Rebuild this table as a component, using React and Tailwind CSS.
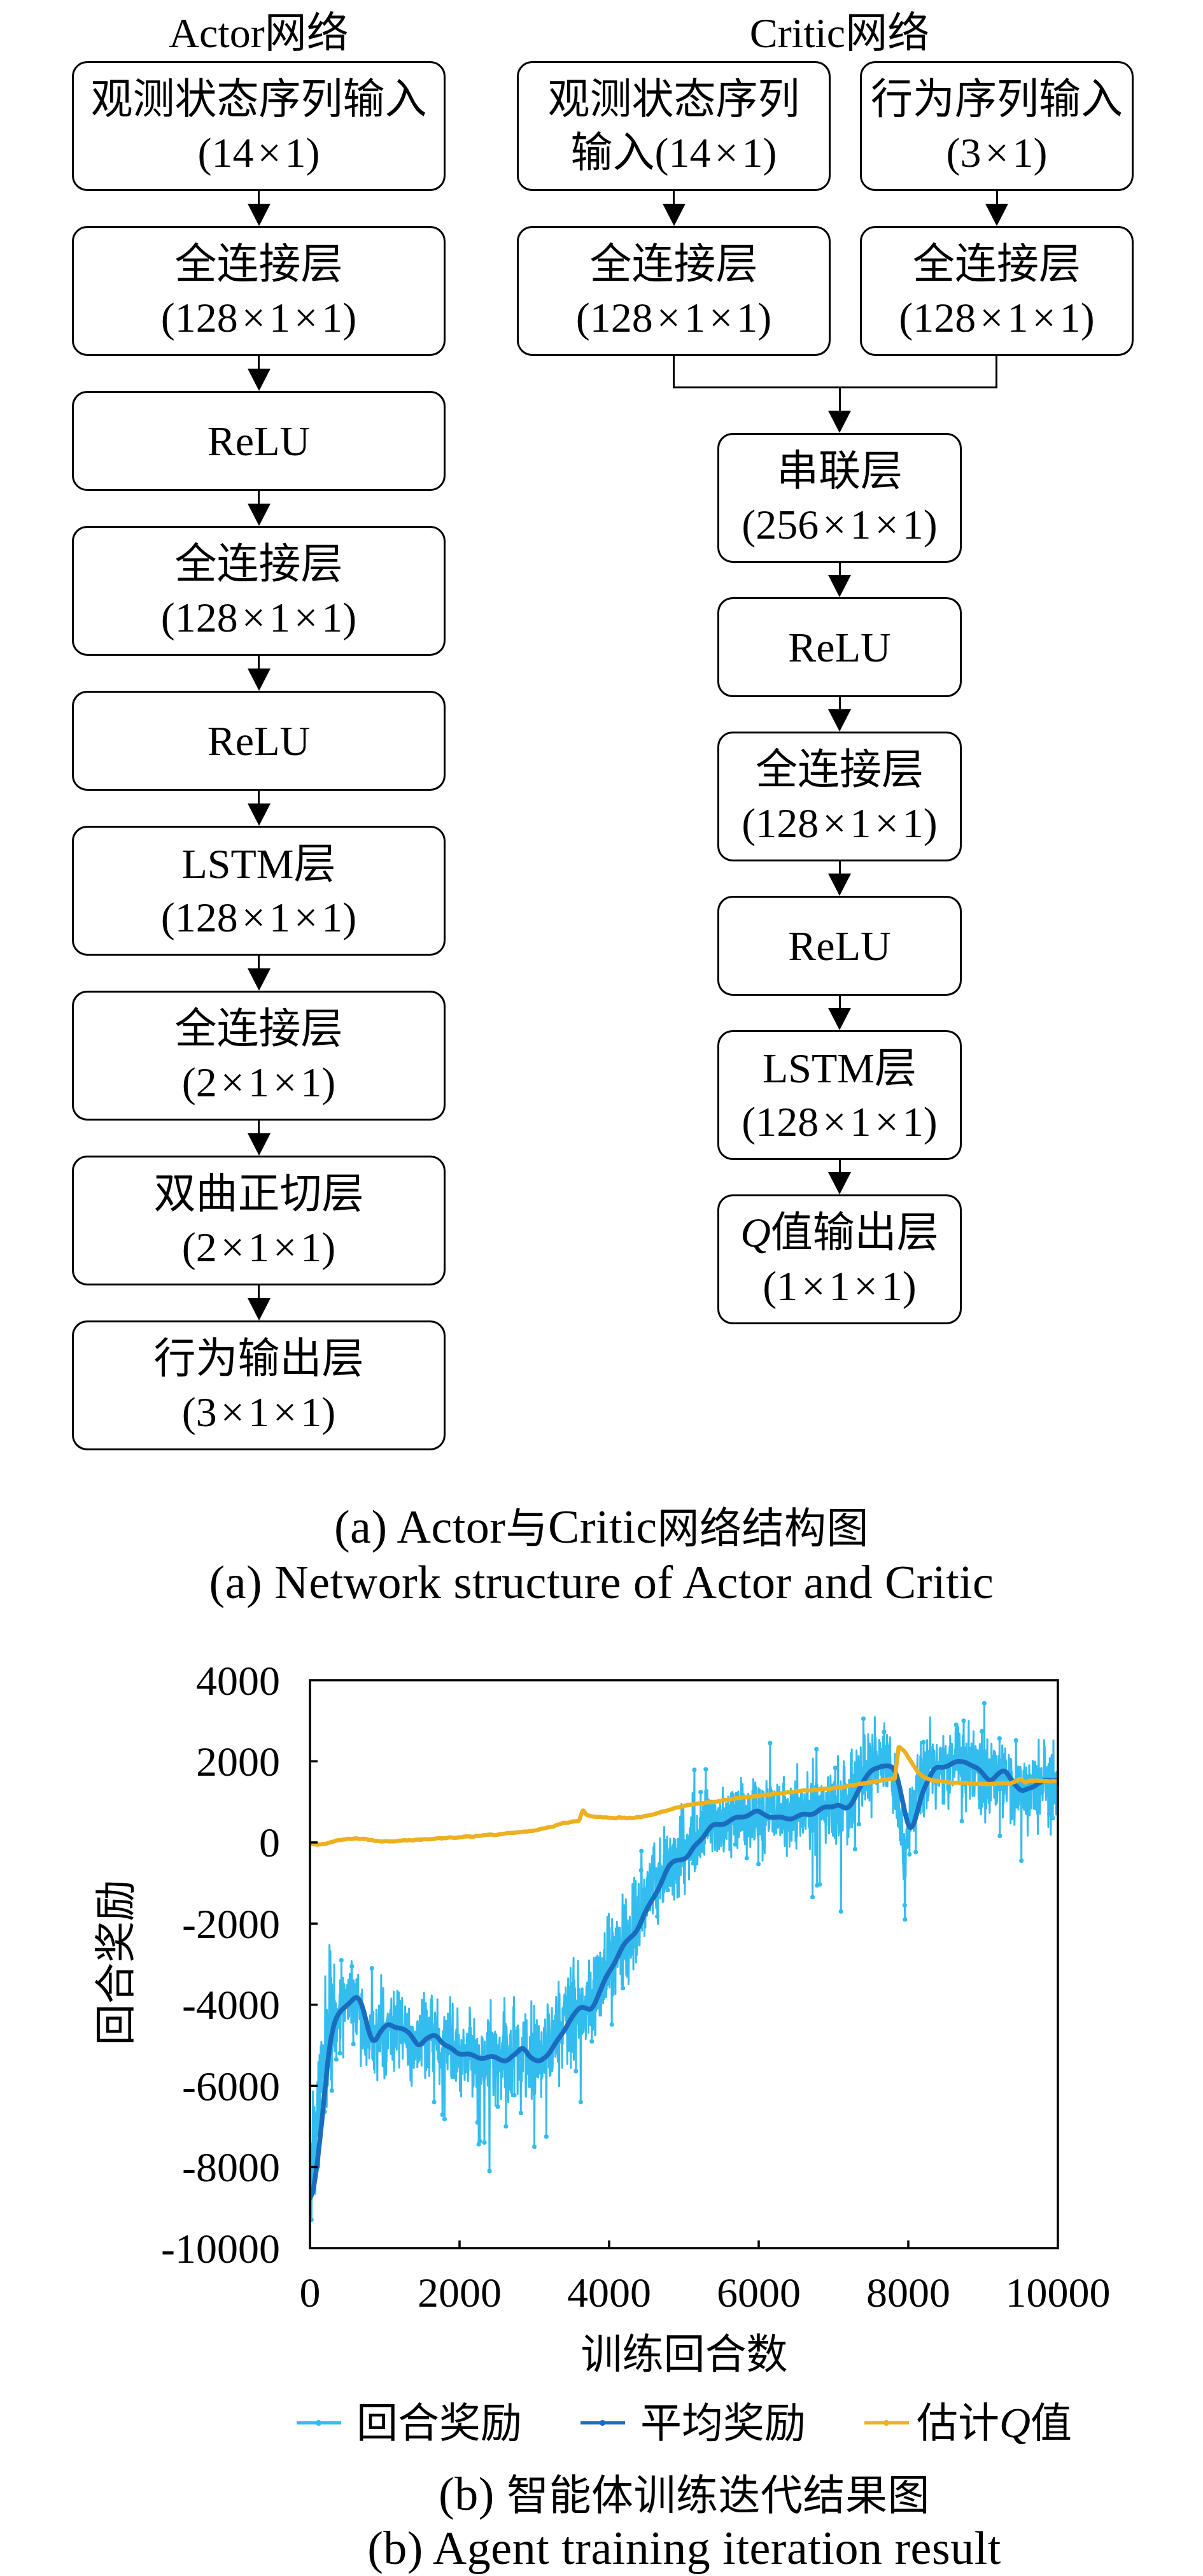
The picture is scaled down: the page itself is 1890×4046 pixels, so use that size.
import React from 'react';

// ---------- diagram pieces ----------

function Dim({ v }) {
  return (
    <span>
      (
      {v.map((n, i) => (
        <React.Fragment key={i}>
          {i > 0 && <span className="mx-[6px]">×</span>}
          {n}
        </React.Fragment>
      ))}
      )
    </span>
  );
}

function Box({ lines, short }) {
  return (
    <div
      className={`w-full flex flex-col items-center justify-center rounded-[24px] border-[3px] border-black bg-white text-[66px] ${
        short ? 'h-[157px]' : 'h-[204px]'
      }`}
    >
      {lines.map((l, i) => (
        <div key={i} className="leading-[84px] whitespace-nowrap">
          {l}
        </div>
      ))}
    </div>
  );
}

function Arrow({ size }) {
  return (
    <div className="flex flex-col items-center">
      <div
        className={`w-[3px] bg-black ${
          size === 'join' ? 'h-[35px]' : size === 'critic' ? 'h-[19px]' : 'h-[20px]'
        }`}
      />
      <div className="h-0 w-0 border-x-[18px] border-t-[35px] border-x-transparent border-t-black" />
    </div>
  );
}

const FC128 = ['全连接层', <Dim v={[128, 1, 1]} />];

// ---------- chart data ----------

function mulberry32(a) {
  return function () {
    a |= 0;
    a = (a + 0x6d2b79f5) | 0;
    let t = Math.imul(a ^ (a >>> 15), 1 | a);
    t = (t + Math.imul(t ^ (t >>> 7), 61 | t)) ^ t;
    return ((t ^ (t >>> 14)) >>> 0) / 4294967296;
  };
}
const rnd = mulberry32(91);
const gauss = () => (rnd() + rnd() + rnd() + rnd() - 2) * 1.732;

const MEAN = [
  [0, -8930], [60, -8500], [120, -7600], [180, -6500], [240, -5300], [300, -4600],
  [380, -4250], [500, -3950], [620, -3770], [700, -4000], [780, -4600], [850, -4950],
  [950, -4700], [1050, -4470], [1200, -4600], [1350, -4700], [1460, -5000], [1560, -4850],
  [1680, -4700], [1800, -5050], [2000, -5200], [2230, -5260], [2450, -5300], [2640, -5400],
  [2760, -5250], [2850, -5000], [2950, -5300], [3050, -5420], [3200, -5150], [3360, -4790],
  [3500, -4300], [3620, -4100], [3770, -4080], [3870, -3700], [3980, -3220], [4180, -2600],
  [4380, -2150], [4590, -1350], [4800, -570], [4900, -400], [5050, -410], [5150, -100],
  [5370, 400], [5600, 550], [5970, 730], [6230, 610], [6510, 640], [6740, 710],
  [7070, 970], [7140, 830], [7210, 860], [7340, 1360], [7530, 1790], [7630, 1880],
  [7800, 1820], [7850, 1700], [7930, 1000], [8000, 380], [8040, 280], [8100, 600],
  [8180, 1250], [8270, 1550], [8360, 1800], [8550, 1900], [8770, 2040], [8950, 1780],
  [9100, 1520], [9300, 1760], [9420, 1450], [9515, 1220], [9620, 1380], [9730, 1480],
  [10000, 1550],
];

const QPTS = [
  [0, -20], [100, -60], [200, -40], [400, 60], [600, 100], [800, 60], [1000, 20],
  [1200, 40], [1500, 70], [2000, 130], [2500, 200], [3000, 290], [3200, 380], [3400, 480],
  [3550, 520], [3610, 540], [3640, 840], [3690, 690], [3750, 650], [4000, 610], [4300, 600],
  [4500, 650], [4800, 800], [5050, 920], [5500, 1030], [6000, 1150], [6500, 1260],
  [7000, 1340], [7500, 1480], [7840, 1580], [7850, 2300], [7880, 2370], [7950, 2250],
  [8050, 1950], [8150, 1680], [8300, 1540], [8600, 1470], [9000, 1440], [9400, 1470],
  [9500, 1570], [9560, 1480], [9700, 1530], [10000, 1500],
];

const SPIKES = [
  [2400, -8100], [2330, -7400], [2240, -6900], [3000, -7500], [3620, -6400], [1660, -6400],
  [2620, -7000], [7100, -1700], [7950, -1550], [7400, 3050], [8740, 3000], [8640, 2900],
  [6150, 2450], [6770, 2300], [9510, -450], [420, -2900], [560, -3050], [20, -9300],
];

function interp(pts, x) {
  if (x <= pts[0][0]) return pts[0][1];
  for (let i = 1; i < pts.length; i++) {
    if (x <= pts[i][0]) {
      const [x0, y0] = pts[i - 1];
      const [x1, y1] = pts[i];
      return y0 + ((y1 - y0) * (x - x0)) / (x1 - x0);
    }
  }
  return pts[pts.length - 1][1];
}

function smooth(arr, w) {
  return arr.map((_, i) => {
    let s = 0;
    let n = 0;
    for (let k = i - w; k <= i + w; k++) {
      if (k >= 0 && k < arr.length) {
        s += arr[k];
        n++;
      }
    }
    return s / n;
  });
}

function sigma(x) {
  if (x < 300) return 800;
  if (x < 1500) return 480;
  if (x < 3700) return 540;
  if (x < 5200) return 470;
  return 460;
}

const meanGrid = [];
for (let x = 0; x <= 10000; x += 10) {
  meanGrid.push(interp(MEAN, x) + 35 * Math.sin(x / 47) + 25 * Math.sin(x / 131));
}
const meanS = smooth(meanGrid, 4);
const meanAt = (x) => meanS[Math.min(1000, Math.max(0, Math.round(x / 10)))];

const raw = [];
for (let x = 0; x <= 10000; x += 4) {
  const s = sigma(x);
  let v = meanAt(x + 70) + s * gauss();
  v += -900 * Math.exp(-(((x - 7950) / 35) ** 2));
  let mark = false;
  if (rnd() < 0.025) {
    const dir = rnd() < (x < 4500 ? 0.72 : 0.5) ? -1 : 1;
    v += dir * (1.2 + 2 * rnd()) * s;
    mark = true;
  }
  raw.push([x, Math.max(-9700, Math.min(3800, v)), mark]);
}
SPIKES.forEach(([sx, sv]) => {
  const i = Math.round(sx / 4);
  raw[i][1] = sv;
  raw[i][2] = true;
});

const qGrid = [];
for (let x = 0; x <= 10000; x += 10) qGrid.push(interp(QPTS, x) + 14 * gauss());
const qS = smooth(qGrid, 2);

// plot frame inside the svg
const PL = 257;
const PT = 57;
const PW = 1175;
const PH = 892;
const X = (d) => PL + (d / 10000) * PW;
const Y = (v) => PT + ((4000 - v) / 14000) * PH;

const rawPts = raw.map(([x, v]) => `${X(x).toFixed(1)},${Y(v).toFixed(1)}`).join(' ');
const meanPts = meanS.map((v, i) => `${X(i * 10).toFixed(1)},${Y(v).toFixed(1)}`).join(' ');
const qPts = qS.map((v, i) => `${X(i * 10).toFixed(1)},${Y(v).toFixed(1)}`).join(' ');

function RewardChart() {
  const yTicks = [4000, 2000, 0, -2000, -4000, -6000, -8000, -10000];
  const xTicks = [0, 2000, 4000, 6000, 8000, 10000];
  return (
    <svg width="1620" height="1060" viewBox="0 0 1620 1060" className="block">
      <defs>
        <clipPath id="plot">
          <rect x={PL} y={PT} width={PW} height={PH} />
        </clipPath>
      </defs>
      <g clipPath="url(#plot)">
        <polyline points={rawPts} fill="none" stroke="#33BCEE" strokeWidth="3" strokeLinejoin="round" />
        {raw
          .filter((p) => p[2])
          .map(([x, v]) => (
            <circle key={x} cx={X(x)} cy={Y(v)} r="3.5" fill="#33BCEE" />
          ))}
        <polyline points={meanPts} fill="none" stroke="#1A6DBE" strokeWidth="7.5" strokeLinejoin="round" strokeLinecap="round" />
        <polyline points={qPts} fill="none" stroke="#EDB120" strokeWidth="6.5" strokeLinejoin="round" strokeLinecap="round" />
      </g>
      <rect x={PL} y={PT} width={PW} height={PH} fill="none" stroke="#000" strokeWidth="3.5" />
      {yTicks.slice(1, -1).map((v) => (
        <line key={v} x1={PL} x2={PL + 12} y1={Y(v)} y2={Y(v)} stroke="#000" strokeWidth="3.5" />
      ))}
      {xTicks.slice(1, -1).map((d) => (
        <line key={d} x1={X(d)} x2={X(d)} y1={PT + PH} y2={PT + PH - 12} stroke="#000" strokeWidth="3.5" />
      ))}
      <g fontFamily="'Liberation Serif', serif" fontSize="66" fill="#000">
        {yTicks.map((v) => (
          <text key={v} x="210" y={Y(v)} textAnchor="end" dominantBaseline="central">
            {v < 0 ? `-${-v}` : v}
          </text>
        ))}
        {xTicks.map((d) => (
          <text key={d} x={X(d)} y="1018" textAnchor="middle" dominantBaseline="central">
            {d}
          </text>
        ))}
      </g>
    </svg>
  );
}

function LegendItem({ color, children, gap }) {
  return (
    <div className="flex items-center">
      <div className={`w-[70px] h-[5px] flex items-center justify-center ${color}`}>
        <div className={`w-[9px] h-[9px] rounded-full ${color}`} />
      </div>
      <span className={`text-[65px] leading-[80px] whitespace-nowrap ${gap}`}>{children}</span>
    </div>
  );
}

export default function App() {
  return (
    <div className="w-[1890px] h-[4046px] overflow-hidden bg-white text-black font-['Liberation_Serif','Noto_Sans_CJK_SC',serif]">
      {/* network diagrams */}
      <div className="flex pl-[113px]">
        {/* Actor */}
        <div className="w-[587px] flex flex-col items-center">
          <div className="h-[96px] pt-[6px] flex items-center justify-center text-[66px] whitespace-nowrap">Actor网络</div>
          <Box lines={['观测状态序列输入', <Dim v={[14, 1]} />]} />
          <Arrow />
          <Box lines={FC128} />
          <Arrow />
          <Box lines={['ReLU']} short />
          <Arrow />
          <Box lines={FC128} />
          <Arrow />
          <Box lines={['ReLU']} short />
          <Arrow />
          <Box lines={['LSTM层', <Dim v={[128, 1, 1]} />]} />
          <Arrow />
          <Box lines={['全连接层', <Dim v={[2, 1, 1]} />]} />
          <Arrow />
          <Box lines={['双曲正切层', <Dim v={[2, 1, 1]} />]} />
          <Arrow />
          <Box lines={['行为输出层', <Dim v={[3, 1, 1]} />]} />
        </div>

        {/* Critic */}
        <div className="ml-[112px] w-[969px] flex flex-col">
          <div className="ml-[315px] w-[384px] h-[96px] pt-[6px] flex items-center justify-center text-[66px] whitespace-nowrap">
            Critic网络
          </div>
          <div className="flex gap-[46px]">
            <div className="w-[493px] flex flex-col items-center">
              <Box lines={['观测状态序列', <>输入<Dim v={[14, 1]} /></>]} />
              <Arrow />
              <Box lines={FC128} />
            </div>
            <div className="w-[430px] flex flex-col items-center">
              <Box lines={['行为序列输入', <Dim v={[3, 1]} />]} />
              <Arrow />
              <Box lines={FC128} />
            </div>
          </div>
          <div className="ml-[245px] w-[510px] h-[51px] border-x-[3px] border-b-[3px] border-black" />
          <div className="ml-[315px] w-[384px] flex flex-col items-center">
            <Arrow size="join" />
            <Box lines={['串联层', <Dim v={[256, 1, 1]} />]} />
            <Arrow size="critic" />
            <Box lines={['ReLU']} short />
            <Arrow size="critic" />
            <Box lines={FC128} />
            <Arrow size="critic" />
            <Box lines={['ReLU']} short />
            <Arrow size="critic" />
            <Box lines={['LSTM层', <Dim v={[128, 1, 1]} />]} />
            <Arrow size="critic" />
            <Box lines={[<><i>Q</i>值输出层</>, <Dim v={[1, 1, 1]} />]} />
          </div>
        </div>
      </div>

      {/* caption (a) */}
      <div className="mt-[78px] flex flex-col items-center text-[74px] leading-[85px] tracking-[0.5px]">
        <div className="whitespace-nowrap">
          (a) Actor<span className="text-[66px]">与</span>Critic<span className="text-[66px]">网络结构图</span>
        </div>
        <div className="whitespace-nowrap">(a) Network structure of Actor and Critic</div>
      </div>

      {/* training chart */}
      <div className="mt-[54px] flex pl-[137px]">
        <div className="w-[90px] h-[1060px] flex items-center justify-center pb-[60px]">
          <div className="-rotate-90 whitespace-nowrap text-[65px] leading-none">回合奖励</div>
        </div>
        <div className="ml-[3px]">
          <RewardChart />
        </div>
      </div>

      <div className="ml-[260px] w-[1630px] flex flex-col items-center">
        <div className="mt-[16px] text-[65px] leading-[80px] whitespace-nowrap">训练回合数</div>
        <div className="mt-[27px] flex items-center justify-center gap-[92px]">
          <LegendItem color="bg-[#33BCEE]" gap="ml-[24px]">回合奖励</LegendItem>
          <LegendItem color="bg-[#1A6DBE]" gap="ml-[24px]">平均奖励</LegendItem>
          <LegendItem color="bg-[#EDB120]" gap="ml-[12px]">
            估计<i className="font-['Liberation_Serif',serif] text-[68px]">Q</i>值
          </LegendItem>
        </div>
        <div className="mt-[30px] flex flex-col items-center text-[74px] leading-[83px] tracking-[0.5px]">
          <div className="whitespace-nowrap">
            (b) <span className="text-[66px]">智能体训练迭代结果图</span>
          </div>
          <div className="whitespace-nowrap">(b) Agent training iteration result</div>
        </div>
      </div>
    </div>
  );
}
